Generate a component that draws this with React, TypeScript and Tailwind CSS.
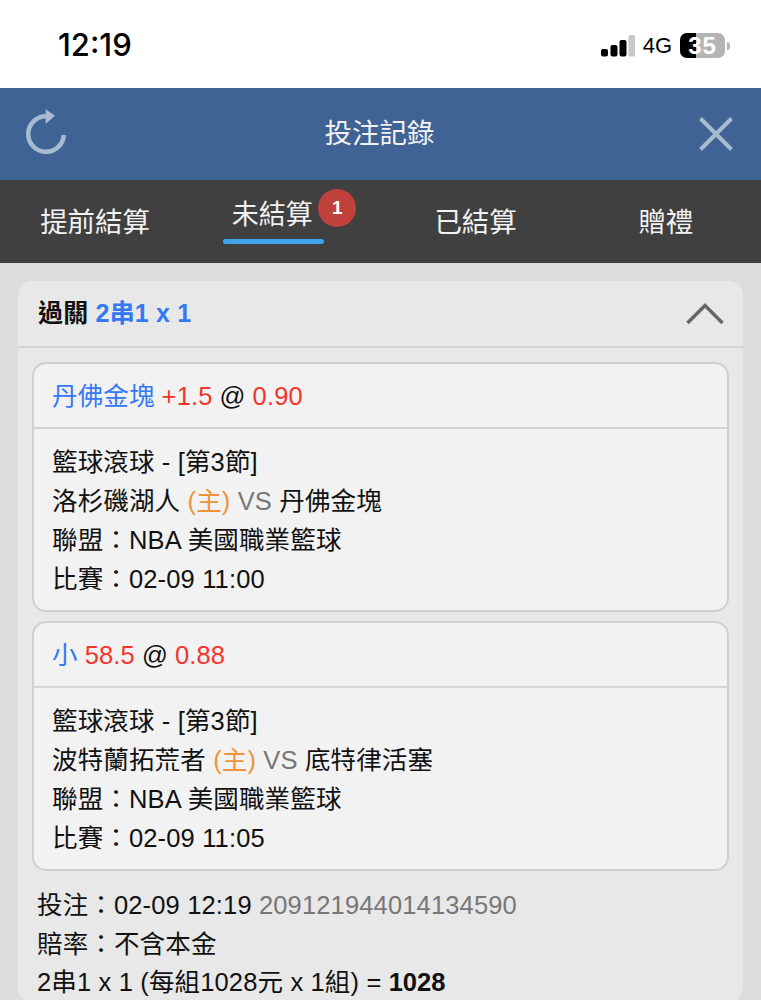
const cjk = 'font-["Liberation_Sans","Noto_Sans_CJK_TC",sans-serif]';

const SignalIcon = () => (
  <svg className="h-[22px] w-[34px]" viewBox="0 0 34 22">
    <rect x="0" y="14" width="7" height="7.5" rx="2" fill="#000" />
    <rect x="9.5" y="10" width="7" height="11.5" rx="2" fill="#000" />
    <rect x="18.5" y="5" width="7" height="16.5" rx="2" fill="#000" />
    <rect x="27.5" y="0" width="6.5" height="21.5" rx="1.5" fill="#c9c9c9" />
  </svg>
);

const Battery = () => (
  <div className="flex items-center">
    <div className="relative flex h-[25px] w-[45px] items-center justify-center overflow-hidden rounded-[7px] bg-[#b4b4b4]">
      <div className="absolute inset-y-0 left-0 w-[16px] bg-black" />
      <span className="relative text-[24px] leading-none font-bold tracking-[1px] text-white">35</span>
    </div>
    <div className="ml-[2px] h-[8px] w-[3px] rounded-r-full bg-[#b4b4b4]" />
  </div>
);

const RefreshIcon = () => (
  <svg className="h-[52px] w-[44px]" viewBox="0 0 44 52" fill="none">
    <path d="M38.8 27A17.8 17.8 0 1 1 21 8.2" stroke="#a9bbd0" strokeWidth="4.5" />
    <path d="M20.7 1.3 L30 7.7 L20.7 16 Z" fill="#a9bbd0" />
  </svg>
);

const CloseIcon = () => (
  <svg className="h-[34px] w-[34px]" viewBox="0 0 34 34" fill="none">
    <path d="M1.5 1.5 L32.5 32.5 M32.5 1.5 L1.5 32.5" stroke="#a9bbd0" strokeWidth="4" />
  </svg>
);

type Leg = {
  pick: string;
  line: string;
  odds: string;
  home: string;
  away: string;
  time: string;
};

const legs: Leg[] = [
  { pick: '丹佛金塊', line: '+1.5', odds: '0.90', home: '洛杉磯湖人', away: '丹佛金塊', time: '02-09 11:00' },
  { pick: '小', line: '58.5', odds: '0.88', home: '波特蘭拓荒者', away: '底特律活塞', time: '02-09 11:05' },
];

const LegCard = ({ leg }: { leg: Leg }) => (
  <div className="rounded-[14px] border-2 border-[#d0d0d0] bg-[#f2f2f2]">
    <div className="flex h-[65px] items-center border-b-2 border-[#d4d4d4] pt-[2px] pl-[18px] text-[25.5px] tracking-[0.15px]">
      <span className="text-[#3478f6]">{leg.pick}</span>
      <span className="ml-[7px] text-[#f5342c]">{leg.line}</span>
      <span className="ml-[7px] text-[#111]">@</span>
      <span className="ml-[7px] text-[#f5342c]">{leg.odds}</span>
    </div>
    <div className="pt-[14px] pb-[11px] pl-[18px] text-[25.5px] leading-[39px] tracking-[0.15px] text-[#111]">
      <div>籃球滾球 - [第3節]</div>
      <div>
        {leg.home} <span className="text-[#f0923a]">(主)</span> <span className="text-[#777]">VS</span> {leg.away}
      </div>
      <div>聯盟：NBA 美國職業籃球</div>
      <div>比賽：{leg.time}</div>
    </div>
  </div>
);

export default function App() {
  return (
    <div className={`h-[1000px] w-[761px] overflow-hidden bg-[#dcdcdc] ${cjk}`}>
      <div className="flex h-[88px] items-center justify-between bg-white pt-[3px] pr-[31px] pl-[58px]">
        <span className="font-['Inter'] text-[31px] font-medium text-black">12:19</span>
        <div className="flex items-center gap-[8px]">
          <SignalIcon />
          <span className="text-[22px] text-black">4G</span>
          <Battery />
        </div>
      </div>

      <div className="grid h-[92px] grid-cols-3 items-center bg-[#3f6394] pr-[28px] pl-[25px]">
        <div className="justify-self-start">
          <RefreshIcon />
        </div>
        <span className="justify-self-center pl-[1px] text-[27.5px] text-[#f2f2f2]">投注記錄</span>
        <div className="justify-self-end">
          <CloseIcon />
        </div>
      </div>

      <div className="grid h-[83px] grid-cols-4 bg-[#404040] text-[27.5px] text-[#f2f2f2]">
        <div className="flex items-center justify-center pt-[2px]">提前結算</div>
        <div className="flex items-start justify-start pt-[19px] pl-[33px]">
          <div className="relative">
            <div className="px-[8.5px] pb-[7px] text-[27px] leading-[33px]">未結算</div>
            <div className="h-[5px] w-[101px] rounded-full bg-[#3fa3f0]" />
            <div className="absolute top-[-10px] left-[95px] flex h-[38px] w-[38px] items-center justify-center rounded-full bg-[#c0403c] text-[19px] font-bold text-white">
              1
            </div>
          </div>
        </div>
        <div className="flex items-center justify-center pt-[2px]">已結算</div>
        <div className="flex items-center justify-center pt-[2px]">贈禮</div>
      </div>

      <div className="px-[18px] pt-[18px]">
        <div className="rounded-[14px] bg-[#e8e8e8]">
          <div className="flex h-[67px] items-center justify-between border-b-2 border-[#d4d4d4] pr-[19px] pl-[20px] text-[25px] font-bold tracking-[0.2px]">
            <div>
              <span className="text-[#111]">過關</span> <span className="text-[#3478f6]">2串1 x 1</span>
            </div>
            <svg className="h-[22px] w-[38px]" viewBox="0 0 38 22" fill="none">
              <path d="M1.5 20 L19 2.5 L36.5 20" stroke="#666" strokeWidth="3.5" />
            </svg>
          </div>

          <div className="flex flex-col gap-[9px] px-[14px] pt-[14px]">
            {legs.map((leg) => (
              <LegCard key={leg.home} leg={leg} />
            ))}
          </div>

          <div className="pt-[15px] pl-[19px] text-[25.5px] leading-[38.7px] tracking-[0.15px] text-[#111]">
            <div>
              投注：02-09 12:19 <span className="text-[#777]">209121944014134590</span>
            </div>
            <div>賠率：不含本金</div>
            <div>
              2串1 x 1 (每組1028元 x 1組) = <span className="font-bold tracking-normal">1028</span>
            </div>
          </div>
        </div>
      </div>
    </div>
  );
}
